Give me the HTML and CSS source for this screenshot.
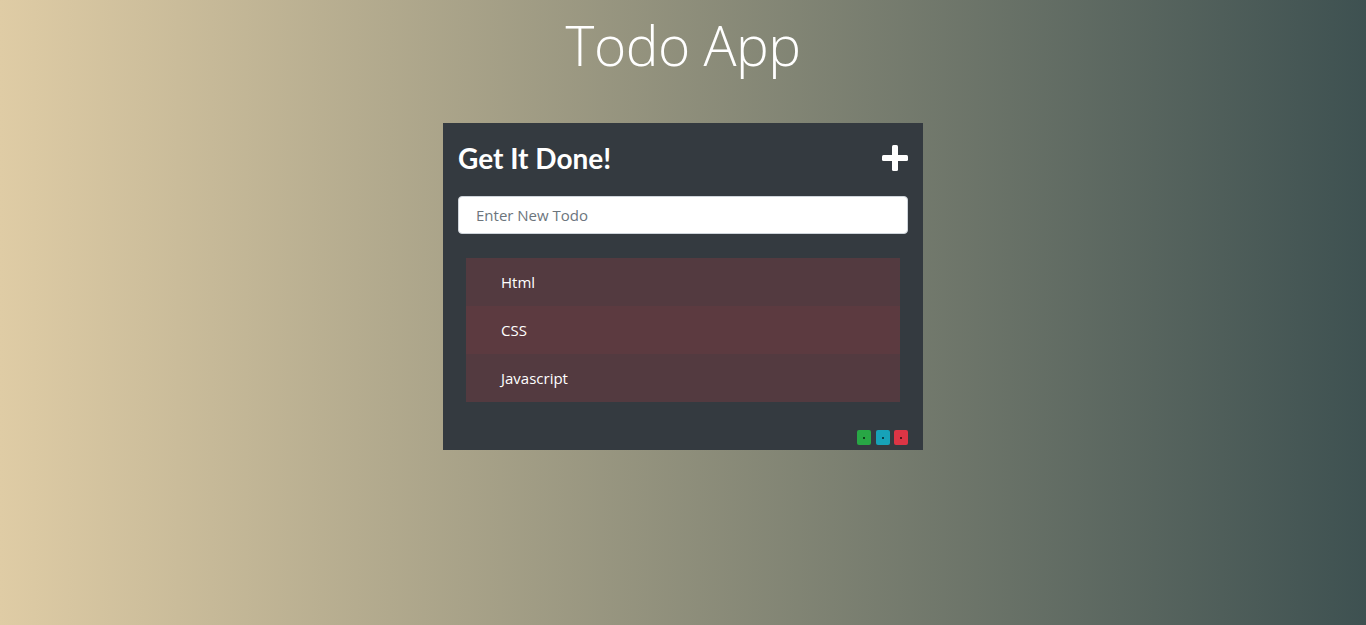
FILE: index.html
```html
<!DOCTYPE html>
<html lang="en">
<head>
<meta charset="utf-8">
<title>Todo App</title>
<link rel="stylesheet" href="styles.css">
</head>
<body>
  <h1 class="app-title">Todo App</h1>
  <div class="card">
    <div class="card-head">
      <h2 class="card-title">Get It Done!</h2>
      <svg class="plus" width="26" height="26" viewBox="0 0 26 26" aria-hidden="true">
        <rect x="10" y="0" width="6" height="26" rx="1.5" fill="#fff"/>
        <rect x="0" y="10" width="26" height="6" rx="1.5" fill="#fff"/>
      </svg>
    </div>
    <input class="todo-input" type="text" placeholder="Enter New Todo">
    <ul class="todo-list">
      <li class="todo-item">Html</li>
      <li class="todo-item alt">CSS</li>
      <li class="todo-item">Javascript</li>
    </ul>
    <div class="filters">
      <button class="dot-btn green"><span></span></button>
      <button class="dot-btn cyan"><span></span></button>
      <button class="dot-btn red"><span></span></button>
    </div>
  </div>
</body>
</html>
```
FILE: styles.css
```css
html, body {
  height: 100%;
}
body {
  margin: 0;
  font-family: Lato, "Open Sans", sans-serif;
  background: linear-gradient(to right, #dfcca5 0%, #3e5151 100%);
  color: #fff;
  display: flex;
  flex-direction: column;
  align-items: center;
}
.app-title {
  margin: 10px 0 0;
  font-family: "Open Sans", sans-serif;
  font-weight: 300;
  font-size: 55px;
  line-height: 70px;
  letter-spacing: -0.5px;
  color: #fff;
}
.card {
  margin-top: 43px;
  width: 480px;
  box-sizing: border-box;
  background: #343a40;
  padding: 15px 15px 5px;
}
.card-head {
  display: flex;
  justify-content: space-between;
  align-items: center;
  height: 40px;
}
.card-title {
  margin: 0;
  font-size: 28px;
  font-weight: 700;
  line-height: 38px;
}
.plus {
  display: block;
}
.todo-input {
  margin-top: 18px;
  display: block;
  width: 100%;
  box-sizing: border-box;
  height: 38px;
  border: 1px solid #ced4da;
  border-radius: 4px;
  padding: 0 17px;
  font-family: "Open Sans", sans-serif;
  font-size: 15px;
  color: #495057;
  background: #fff;
}
.todo-input::placeholder {
  color: #6c757d;
}
.todo-list {
  list-style: none;
  margin: 24px 8px 0;
  padding: 0;
}
.todo-item {
  height: 48px;
  line-height: 48px;
  padding-left: 35px;
  font-family: "Open Sans", sans-serif;
  font-size: 15px;
  background: #533a40;
  color: #fff;
}
.todo-item.alt {
  background: #5c3a40;
}
.filters {
  display: flex;
  justify-content: flex-end;
  gap: 4.5px;
  margin-top: 28px;
}
.dot-btn {
  width: 14px;
  height: 15px;
  padding: 0;
  border: none;
  border-radius: 2px;
  display: flex;
  align-items: center;
  justify-content: center;
}
.dot-btn span {
  width: 2px;
  height: 2px;
  background: rgba(0,0,0,0.6);
}
.green { background: #28a745; }
.cyan { background: #17a2b8; }
.red { background: #dc3545; }
```
